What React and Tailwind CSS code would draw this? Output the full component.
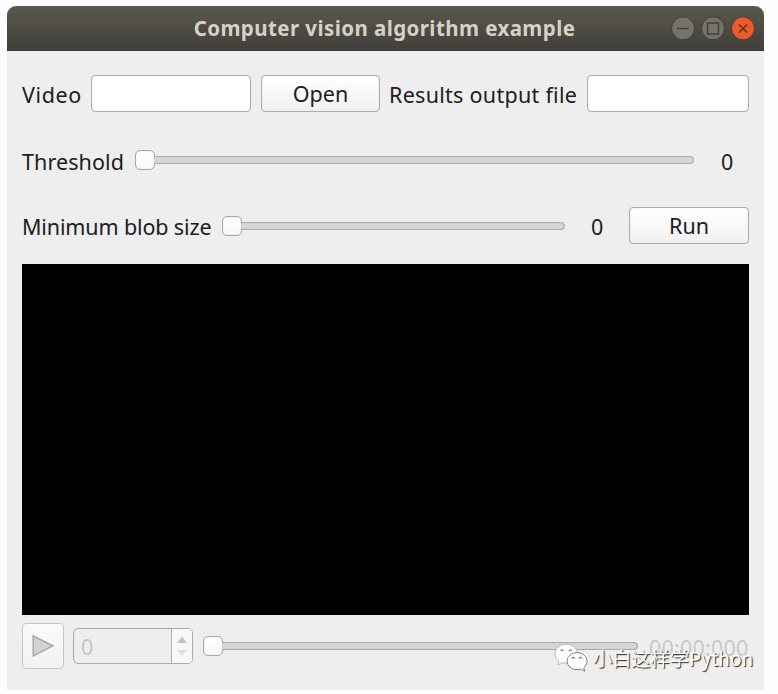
function Label({ className = "", children }) {
  return (
    <span className={`block shrink-0 whitespace-nowrap text-[21.5px] leading-[30px] ${className}`}>
      {children}
    </span>
  );
}

function TextField({ className }) {
  return (
    <div className={`h-[37px] shrink-0 rounded-[4px] border border-[#adadad] bg-white shadow-[inset_0_0_1px_#b5b5b5] ${className}`} />
  );
}

function Button({ className = "", children }) {
  return (
    <button
      className={`flex h-[37px] shrink-0 items-center justify-center rounded-[4px] border border-[#adadad] bg-linear-to-b from-white to-[#f1f1f1] text-[21.5px] leading-[30px] shadow-[inset_0_0_1px_#b5b5b5] ${className}`}
    >
      {children}
    </button>
  );
}

function Slider({ className }) {
  return (
    <div className={`flex h-5 shrink-0 items-center ${className}`}>
      <div className="size-5 shrink-0 rounded-[5px] border border-[#a8a8a8] bg-linear-to-b from-white to-[#f8f8f8] shadow-[inset_0_0_1px_#b5b5b5]" />
      <div className="-ml-px h-2 grow rounded-r-[4px] border border-l-0 border-[#adadad] bg-[#d6d6d6] shadow-[inset_0_0_1px_#a8a8a8]" />
    </div>
  );
}

function TitleBar() {
  return (
    <header className="relative flex h-[45px] items-center justify-center rounded-t-[9px] border-b border-[#383732] bg-linear-to-b from-[#5b584d] to-[#403f3a]">
      <h1 className="mr-[2px] whitespace-nowrap font-['Noto_Sans'] text-[20.5px] leading-[30px] font-bold tracking-[0.42px] text-[#d6d1c6]">
        Computer vision algorithm example
      </h1>
      <div className="absolute top-[10px] right-[9px] flex gap-[6px]">
        <svg width="24" height="24" viewBox="0 0 24 24" fill="none" stroke="#403e39">
          <circle cx="12" cy="12.3" r="11.5" fill="#74726b" strokeWidth="1" />
          <path d="M6 12.5h12" strokeWidth="1.4" />
        </svg>
        <svg width="24" height="24" viewBox="0 0 24 24" fill="none" stroke="#403e39">
          <circle cx="12" cy="12.3" r="11.5" fill="#74726b" strokeWidth="1" />
          <rect x="6.5" y="7" width="11" height="11" strokeWidth="1.4" />
        </svg>
        <svg width="24" height="24" viewBox="0 0 24 24" fill="none" stroke="#403e39">
          <circle cx="12" cy="12.3" r="11.5" fill="#ee5b2b" strokeWidth="1" />
          <path d="M8 8.500l8 8M16 8.500l-8 8" stroke="#69341f" strokeWidth="1.7" />
        </svg>
      </div>
    </header>
  );
}

function Watermark() {
  return (
    <div className="absolute top-[637px] left-[547px] flex items-start">
      <svg width="36" height="32" viewBox="0 0 36 32" fill="#fff" stroke="#666" strokeWidth="0.8">
        <path d="M12.200 1.200C5.900 1.200 1 5.300 1 10.700c0 3 1.500 5.500 4 7.300l-1 4 4.600-2.400c1.200.3 2.400.5 3.700.5 6.100 0 11-4.200 11-9.500S18.400 1.200 12.200 1.200z" stroke="#aaa" />
        <path d="M23 9.600c-5.500 0-9.900 3.700-9.900 8.500s4.400 8.600 9.900 8.600c1.200 0 2.400-.2 3.500-.5l4.200 2-1-3.200c2-1.600 3.300-4 3.300-6.700 0-4.900-4.500-8.700-10-8.700z" />
        <path d="M6.500 8q1.500-2.500 3 0M14.800 8q1.500-2.500 3 0M17.700 15.500q1.500-2.500 3 0M25 15.500q1.500-2.500 3 0" fill="none" stroke="#666" strokeWidth="1.100" />
      </svg>
      <span className="-mt-px ml-[3px] whitespace-nowrap font-['Noto_Sans_CJK_SC',sans-serif] text-[19.200px] leading-[32px] text-white [text-shadow:1px_1px_1px_#222]">
        小白这样学Python
      </span>
    </div>
  );
}

export default function App() {
  return (
    <div className="h-[694px] w-[778px] overflow-hidden bg-[#fdfdfd] pt-[6px] pl-[7px] font-['Noto_Sans',sans-serif] text-[#202020]">
      <div className="relative h-[684px] w-[757px] rounded-t-[9px] bg-[#eeeeee]">
        <TitleBar />
        <main className="px-[15px] pt-6">
          <div className="flex h-[37px] items-center">
            <Label className="w-[69px] pt-[3px] tracking-[0.6px]">Video</Label>
            <TextField className="w-[160px]" />
            <Button className="ml-[10px] w-[119px]">Open</Button>
            <Label className="ml-[9px] w-[198px] pt-[3px] tracking-[0.28px]">Results output file</Label>
            <TextField className="w-[162px]" />
          </div>
          <div className="mt-7 flex h-10 items-center">
            <Label className="w-[113px] pt-[3px] tracking-[0.1px]">Threshold</Label>
            <Slider className="w-[559px]" />
            <Label className="ml-[27px] pt-[3px]">0</Label>
          </div>
          <div className="mt-[27px] flex h-[37px] items-center">
            <Label className="w-[200px] pt-[3px] tracking-[-0.13px]">Minimum blob size</Label>
            <Slider className="w-[343px]" />
            <Label className="ml-[26px] w-[38px] pt-[3px]">0</Label>
            <Button className="w-[120px]">Run</Button>
          </div>
          <div className="mt-5 h-[351px] bg-black" />
          <div className="mt-2 flex h-[46px] items-center">
            <div className="flex h-[46px] w-[42px] items-center justify-center rounded-[4px] border-[1.5px] border-[#c6c6c6] bg-linear-to-b from-[#fafafa] to-[#f1f1f1]">
              <svg width="24" height="24" viewBox="0 0 24 24">
                <path d="M2.200 1.800v20L22 11.800z" fill="#d2d2d2" stroke="#a5a5a5" strokeWidth="1.400" />
              </svg>
            </div>
            <div className="ml-[9px] flex h-[36px] w-[120px] rounded-[5px] border border-[#adadad] shadow-[inset_0_0_1px_#b5b5b5]">
              <Label className="grow pt-[3px] pl-[7px] text-[#c4c4c4]">0</Label>
              <div className="flex w-[21px] flex-col items-center justify-center gap-[7px] rounded-r-[4px] border-l border-[#adadad] bg-[#f8f8f8]">
                <svg width="12" height="7" viewBox="0 0 12 7" fill="#c3c3c3">
                  <path d="M1 7h10L6 .5z" />
                </svg>
                <svg width="12" height="6" viewBox="0 0 12 6" fill="#dedede">
                  <path d="M1 0h10L6 6z" />
                </svg>
              </div>
            </div>
            <Slider className="ml-[10px] w-[435px]" />
            <Label className="ml-[11px] pt-1 tracking-[0.2px] text-[#c8c8c8]">00:00:000</Label>
          </div>
        </main>
        <Watermark />
      </div>
    </div>
  );
}
